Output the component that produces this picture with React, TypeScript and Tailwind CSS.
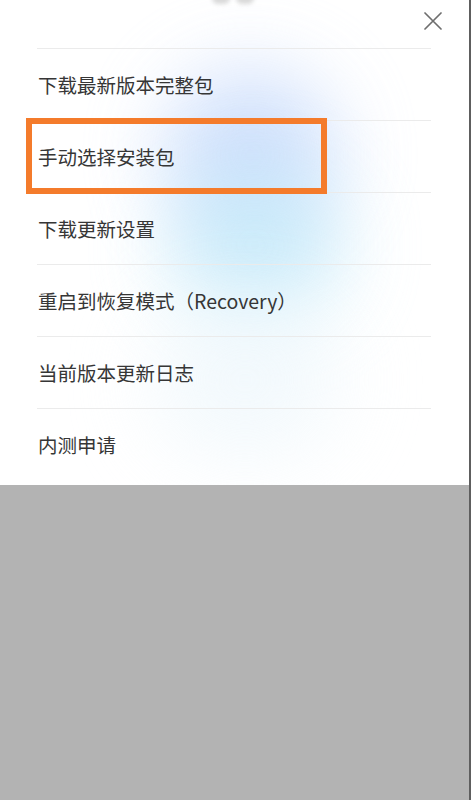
const items = [
  "下载最新版本完整包",
  "手动选择安装包",
  "下载更新设置",
  "重启到恢复模式（Recovery）",
  "当前版本更新日志",
  "内测申请",
];

const CloseIcon = () => (
  <svg width="18" height="18" viewBox="0 0 18 18" fill="none" stroke="#6e6e6e" strokeWidth="1.7" strokeLinecap="round">
    <path d="M1 1L17 17M17 1L1 17" />
  </svg>
);

const App = () => {
  return (
    <div
      className="flex h-[800px] w-full bg-[#b3b3b3]"
      style={{ fontFamily: '"Noto Sans CJK SC", "Noto Sans", sans-serif' }}
    >
      <div className="flex-1">
        <div className="relative h-[485px] overflow-hidden bg-white">
          {/* soft glow behind the menu */}
          <div className="pointer-events-none absolute left-[165px] top-[70px] h-[170px] w-[170px] rounded-full bg-[#c4d8fb] opacity-80 blur-[40px]" />
          <div className="pointer-events-none absolute left-[170px] top-[170px] h-[150px] w-[170px] rounded-full bg-[#c2e9f9] opacity-80 blur-[40px]" />
          <div className="pointer-events-none absolute left-[150px] top-[300px] h-[160px] w-[190px] rounded-full bg-[#eef7fc] opacity-70 blur-[40px]" />

          {/* cut-off handle at the top */}
          <div className="pointer-events-none absolute left-[212px] top-[-8px] h-[12px] w-[18px] rounded-full bg-[#d9d9d9] blur-[2px]" />
          <div className="pointer-events-none absolute left-[236px] top-[-8px] h-[12px] w-[18px] rounded-full bg-[#d9d9d9] blur-[2px]" />

          <div className="relative flex h-[48px] items-start justify-end pr-[27px] pt-[12px]">
            <CloseIcon />
          </div>

          <div className="relative">
            {items.map((label, i) => (
              <div key={label} className="relative ml-[37px] mr-[38px]">
                <div className="h-px bg-[#ebebeb]" />
                <div className="flex h-[71px] items-center pl-px text-[19.5px] text-[#363636]">
                  {label}
                </div>
                {i === 1 && (
                  <div className="absolute left-[-11px] top-[-2px] z-10 h-[76px] w-[301px] border-[6px] border-[#f47b2b]" />
                )}
              </div>
            ))}
          </div>
        </div>
      </div>
      <div className="w-[2px] bg-[#5e5e5e]" />
    </div>
  );
};

export default App;
